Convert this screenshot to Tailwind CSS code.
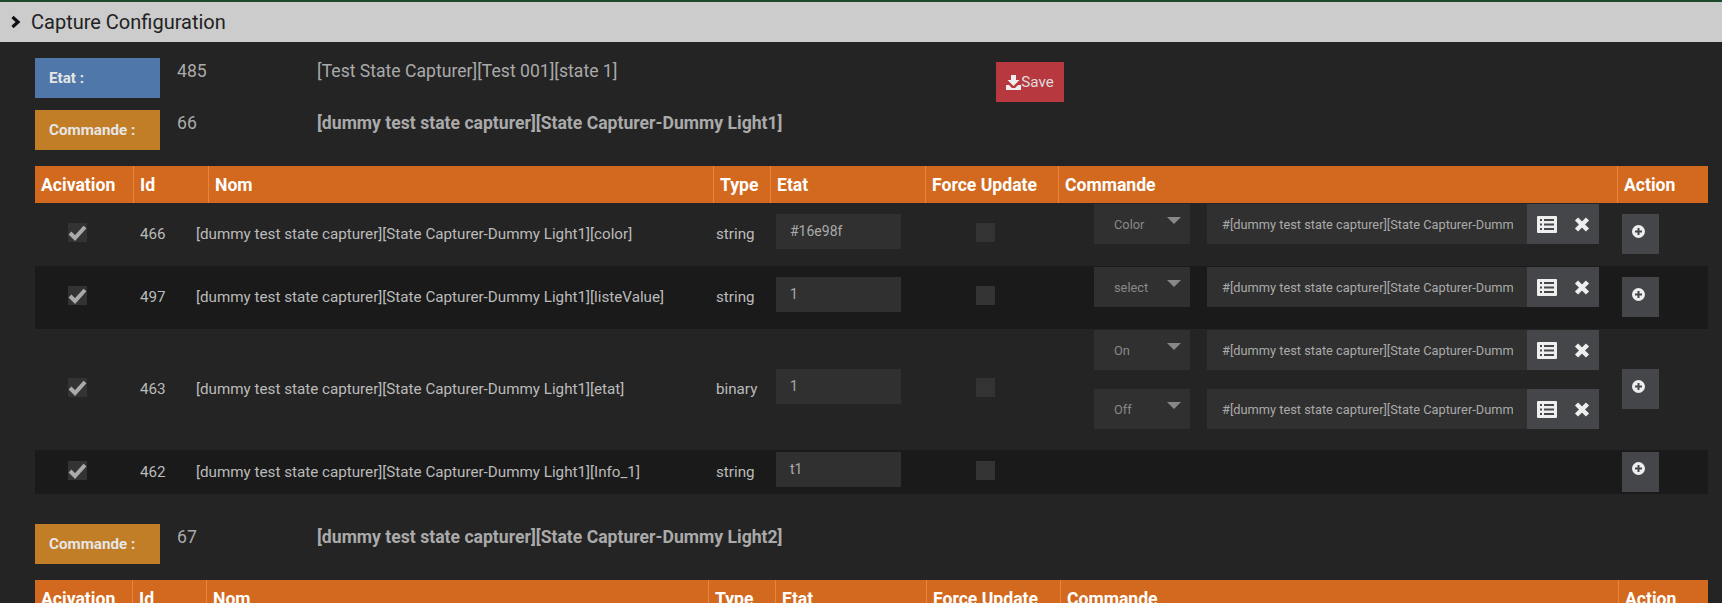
<!DOCTYPE html>
<html lang="en">
<head>
  <meta charset="UTF-8" />
  <title>Capture Configuration</title>
  <script src="https://cdn.jsdelivr.net/npm/@tailwindcss/browser@4"></script>
</head>
<body class="bg-[#242424] h-[603px] overflow-hidden font-['Roboto',sans-serif] text-[#aaa]">
  <div class="h-0.5 bg-[#1d4a2a]"></div>
  <div class="h-10 bg-[#ccc] flex items-center pl-[10px] text-[20px] text-[#222]">
    <svg class="w-[12px] h-[14px] mr-[9px]" viewBox="0 0 12 14"><path d="M2.500 2 L8 7 L2.500 12" fill="none" stroke="#111" stroke-width="3.200"/></svg>
    Capture Configuration
  </div>

  <div class="pl-[35px] pr-[14px]">
    <!-- etat -->
    <div class="flex h-[52px] pt-4 box-content">
      <div class="w-[125px] h-10 bg-[#4f77a9] text-[#e6e6e6] text-[15.200px] font-bold flex items-center pl-[14px]">Etat :</div>
      <div class="w-[157px] pl-[17px] text-[17.600px] leading-[22px] pt-[2px]">485</div>
      <div class="w-[679px] text-[17.600px] leading-[22px] pt-[2px]">[Test State Capturer][Test 001][state 1]</div>
      <button class="mt-[4px] w-[68px] h-10 bg-[#b8383f] text-[#ddd] text-[15.200px] flex items-center justify-center">
        <svg class="w-[15px] h-[15px]" viewBox="0 0 15 15"><path d="M5 0h5v5h3.500L7.500 11 1.500 5H5zM0 10h3l3 3h3l3-3h3v5H0z" fill="#eee"/></svg>Save
      </button>
    </div>

    <!-- commande 66 -->
    <div class="flex h-10 mb-4">
      <div class="w-[125px] h-10 bg-[#c27d27] text-[#e6e6e6] text-[15.200px] font-bold flex items-center pl-[14px]">Commande :</div>
      <div class="w-[157px] pl-[17px] text-[17.600px] leading-[22px] pt-[2px]">66</div>
      <div class="text-[17.600px] leading-[22px] pt-[2px] font-bold">[dummy test state capturer][State Capturer-Dummy Light1]</div>
    </div>

    <!-- table 66 -->
    <div class="h-[37px] bg-[#d2691e] text-white text-[17.600px] font-bold grid grid-cols-[98px_75px_505px_57px_155px_133px_559px_91px] items-stretch">
      <div class="pl-[6px] pt-px flex items-center">Acivation</div>
      <div class="pl-[6px] pt-px flex items-center border-l border-[#e8853d]">Id</div>
      <div class="pl-[6px] pt-px flex items-center border-l border-[#e8853d]">Nom</div>
      <div class="pl-[6px] pt-px flex items-center border-l border-[#e8853d]">Type</div>
      <div class="pl-[6px] pt-px flex items-center border-l border-[#e8853d]">Etat</div>
      <div class="pl-[6px] pt-px flex items-center border-l border-[#e8853d]">Force Update</div>
      <div class="pl-[6px] pt-px flex items-center border-l border-[#e8853d]">Commande</div>
      <div class="pl-[6px] pt-px flex items-center border-l border-[#e8853d]">Action</div>
    </div>

    <!-- rows -->
    <div id="rows66"></div>

    <!-- commande 67 -->
    <div class="flex h-10 mt-[30px] mb-4">
      <div class="w-[125px] h-10 bg-[#c27d27] text-[#e6e6e6] text-[15.200px] font-bold flex items-center pl-[14px]">Commande :</div>
      <div class="w-[157px] pl-[17px] text-[17.600px] leading-[22px] pt-[2px]">67</div>
      <div class="text-[17.600px] leading-[22px] pt-[2px] font-bold">[dummy test state capturer][State Capturer-Dummy Light2]</div>
    </div>

    <div class="h-[37px] bg-[#d2691e] text-white text-[17.600px] font-bold grid grid-cols-[97px_74px_502px_67px_151px_134px_558px_90px] items-stretch">
      <div class="pl-[6px] pt-px flex items-center">Acivation</div>
      <div class="pl-[6px] pt-px flex items-center border-l border-[#e8853d]">Id</div>
      <div class="pl-[6px] pt-px flex items-center border-l border-[#e8853d]">Nom</div>
      <div class="pl-[6px] pt-px flex items-center border-l border-[#e8853d]">Type</div>
      <div class="pl-[6px] pt-px flex items-center border-l border-[#e8853d]">Etat</div>
      <div class="pl-[6px] pt-px flex items-center border-l border-[#e8853d]">Force Update</div>
      <div class="pl-[6px] pt-px flex items-center border-l border-[#e8853d]">Commande</div>
      <div class="pl-[6px] pt-px flex items-center border-l border-[#e8853d]">Action</div>
    </div>
  </div>

  <script>
    const rows = [
      { id: 466, nom: "[color]", type: "string", etat: "#16e98f", cmds: ["Color"], h: "h-[63px]", bg: "bg-[#242424]" },
      { id: 497, nom: "[listeValue]", type: "string", etat: "1", cmds: ["select"], h: "h-[63px]", bg: "bg-[#1a1a1a]" },
      { id: 463, nom: "[etat]", type: "binary", etat: "1", cmds: ["On", "Off"], h: "h-[121px]", bg: "bg-[#242424]" },
      { id: 462, nom: "[Info_1]", type: "string", etat: "t1", cmds: [], h: "h-[44px]", bg: "bg-[#1a1a1a]" }
    ];

    const checkIcon = `<svg class="w-[19px] h-[19px]" viewBox="0 0 19 19"><path d="M2 10l5 5L17 4" fill="none" stroke="#aaa" stroke-width="4"/></svg>`;
    const listIcon = `<svg class="w-[20px] h-[17px]" viewBox="0 0 20 17"><path fill-rule="evenodd" d="M1 0h18a1 1 0 0 1 1 1v15a1 1 0 0 1-1 1H1a1 1 0 0 1-1-1V1a1 1 0 0 1 1-1zM3 3v2h2V3zM7 3v2h10V3zM3 7.500v2h2v-2zM7 7.500v2h10v-2zM3 12v2h2v-2zM7 12v2h10v-2z" fill="#eee"/></svg>`;
    const timesIcon = `<svg class="w-[16px] h-[15px]" viewBox="0 0 16 15"><path d="M2.500 2l11 11M13.500 2l-11 11" stroke="#eee" stroke-width="4.500"/></svg>`;
    const plusIcon = `<svg class="w-[13px] h-[13px]" viewBox="0 0 13 13"><path fill-rule="evenodd" d="M6.500 0a6.500 6.500 0 1 1 0 13a6.500 6.500 0 0 1 0-13zM5.500 3v2.500H3v2h2.500V10h2V7.500H10v-2H7.500V3z" fill="#eee"/></svg>`;

    function cmdRow(label) {
      return `<div class="flex h-10">
        <div class="w-[96px] bg-[#303030] text-[#888] text-[12.800px] flex pl-[20px] pt-[11px] relative">${label}
          <span class="absolute right-[9px] top-[13px] w-0 h-0 border-x-[7px] border-x-transparent border-t-[7px] border-t-[#888]"></span>
        </div>
        <div class="w-[320px] ml-[17px] bg-[#303030] text-[#aaa] text-[12.800px] pl-[15px] pr-[14px] pt-[11px] overflow-hidden whitespace-nowrap">
          <div class="overflow-hidden">#[dummy test state capturer][State Capturer-Dummy Light1][color]</div>
        </div>
        <div class="w-[72px] bg-[#45464a] flex items-center pl-[10px] gap-[17px]">${listIcon}${timesIcon}</div>
      </div>`;
    }

    document.getElementById("rows66").innerHTML = rows.map(r => `
      <div class="${r.h} ${r.bg} grid grid-cols-[105px_56px_520px_60px_200px_118px_528px_86px] items-center">
        <div class="pl-[33px] mb-1"><div class="w-[19px] h-[19px] bg-[#333]">${checkIcon}</div></div>
        <div class="text-[15.200px] text-[#bbb]">${r.id}</div>
        <div class="text-[15.200px] text-[#bbb] whitespace-nowrap">[dummy test state capturer][State Capturer-Dummy Light1]${r.nom}</div>
        <div class="text-[15.200px] text-[#bbb]">${r.type}</div>
        <div class="w-[125px] h-[35px] bg-[#303030] text-[14px] text-[#aaa] flex items-center pl-[14px] mb-[6px]">${r.etat}</div>
        <div class="w-[19px] h-[19px] bg-[#333] mb-1"></div>
        <div class="self-start pt-px flex flex-col gap-[19px]">${r.cmds.map(cmdRow).join("")}</div>
        <div class="w-[37px] h-10 bg-[#45464a] flex items-center justify-center pr-[4px] pb-[6px] mb-px">${plusIcon}</div>
      </div>`).join("");
  </script>
</body>
</html>
